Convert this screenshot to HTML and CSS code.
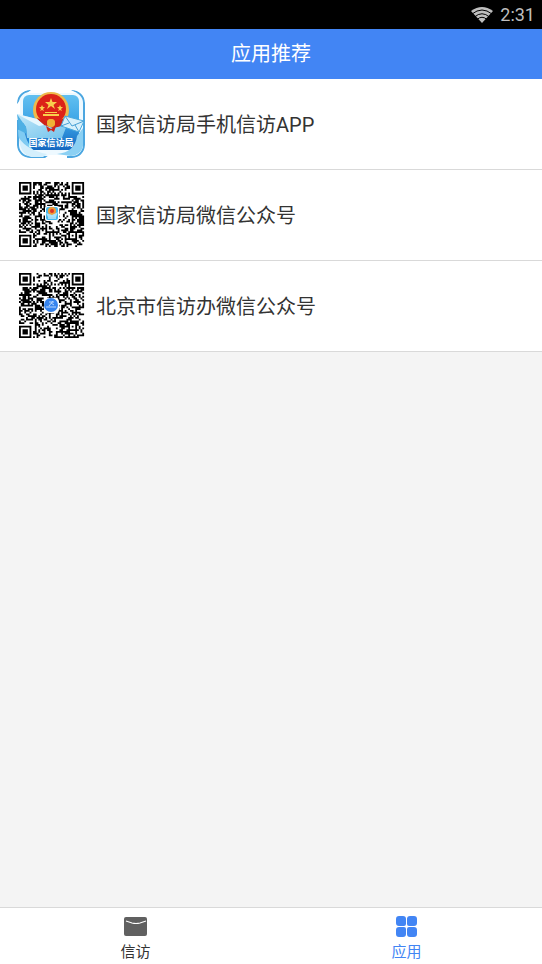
FILE: index.html
```html
<!DOCTYPE html>
<html lang="zh">
<head>
    <meta charset="UTF-8">
    <meta name="viewport" content="width=device-width, initial-scale=1.0">
    <title>应用推荐</title>
    <link rel="stylesheet" href="styles.css">
</head>
<body>
    <div class="status-bar">
        <svg class="wifi" viewBox="0 0 22 16" aria-hidden="true">
            <path fill="#bebebe" d="M0 4Q11-4 22 4L11 16Z"/>
            <path fill="none" stroke="#000" stroke-width="1" d="M1 7Q11-1 21 7M3.500 10Q11 3.500 18.500 10M6 12.500Q11 8 16 12.500"/>
        </svg>
        <span class="time">2:31</span>
    </div>

    <header class="header">
        <h1 class="title">应用推荐</h1>
    </header>

    <main class="content">
        <ul class="app-list">
            <li>
                <a href="#" class="app-item">
                    <svg class="app-icon" viewBox="0 0 68 68" aria-hidden="true">
                        <defs>
                            <linearGradient id="sky" x1="0" y1="0" x2="0" y2="1">
                                <stop offset="0" stop-color="#62c0f0"/>
                                <stop offset="0.500" stop-color="#3aa3e6"/>
                                <stop offset="1" stop-color="#1467c0"/>
                            </linearGradient>
                            <linearGradient id="ribbon" x1="0" y1="0" x2="1" y2="1">
                                <stop offset="0" stop-color="#bfe7f9"/>
                                <stop offset="1" stop-color="#74c3ec"/>
                            </linearGradient>
                            <clipPath id="round"><rect width="68" height="68" rx="13"/></clipPath>
                        </defs>
                        <g clip-path="url(#round)">
                            <rect width="68" height="68" fill="#eef9ff"/>
                            <rect x="1" y="1" width="66" height="66" rx="12" fill="none" stroke="#4ba6e0" stroke-width="2"/>
                            <path fill="#fff" d="M14 0H54L60 3H10ZM0 14L3 10V30H0ZM32 65H50V68H28Z"/>
                            <rect x="6" y="5" width="56" height="55" rx="6" fill="url(#sky)"/>
                            <path fill="#7fcbf2" d="M1 40L7 38Q8 50 16 60L8 61Q1 52 1 40Z"/>
                            <path fill="#d4effc" d="M2 48Q10 60 30 64L26 67H14Q3 64 2 48Z"/>
                            <path fill="#8bd0f3" d="M60 46L66 38V56Q64 65 54 66L40 64Q58 62 60 46Z"/>
                            <circle cx="34" cy="20" r="18" fill="#efb94a"/>
                            <circle cx="34" cy="19" r="15" fill="#dc2318"/>
                            <path fill="#f9cf4d" d="M34 8L35.500 12H40L36.500 15 38 19 34 16 30 19 31.500 15 28 12H32.500ZM25 15L26 17H28L26 19 27 21 25 20 23 21 24 19 22 17H24ZM43 15L44 17H46L44 19 45 21 43 20 41 21 42 19 40 17H42ZM26 24H42V26H26ZM28 22H40V23H28Z"/>
                            <path fill="#cf2318" d="M20 28Q34 35 48 28L46 34Q42 38 38 38L36 42H32L30 38Q26 38 22 34Z"/>
                            <circle cx="34" cy="33" r="4" fill="#efb337"/>
                            <path fill="url(#ribbon)" d="M0 24L20 29 27 35 36 38 50 35 45 48H10L9 37Z"/>
                            <path fill="#4fb0e4" d="M0 24L9 37 10 44 2 40Z"/>
                            <path fill="#e7f7fe" d="M0 24L20 29 27 35 22 36Z"/>
                            <circle cx="34" cy="33" r="4" fill="#efb337"/>
                            <path fill="#cf2318" d="M29 36L34 39 39 36 37 42 34 40 31 42Z"/>
                            <path fill="#d7f0fb" stroke="#4aaade" stroke-width="1" d="M48 26L67 31 62 42 44 36Z"/>
                            <path fill="none" stroke="#469fd5" stroke-width="1" d="M48 26L55 36 67 31M44 36L52 33M58 35L62 42"/>
                            <text class="app-icon-label" x="34" y="56" text-anchor="middle">国家信访局</text>
                        </g>
                    </svg>
                    <span class="app-name">国家信访局手机信访APP</span>
                </a>
            </li>
            <li>
                <a href="#" class="app-item">
                    <svg class="app-icon" viewBox="0 0 68 68" aria-hidden="true">
                        <g id="qrNational" transform="translate(2 1) scale(1.757)"></g>
                        <rect x="28" y="25" width="14" height="15" rx="2" fill="#fff"/>
                        <rect x="29" y="26" width="12" height="13" rx="2" fill="#45b8ed"/>
                        <circle cx="35" cy="30" r="4" fill="#f29b35"/>
                        <circle cx="35" cy="30" r="2" fill="#dc3326"/>
                        <path fill="#a9e1f8" d="M29 32L35 34 41 31 39 36H31Z"/>
                        <path stroke="#fff" stroke-width="1" d="M31 37H39"/>
                    </svg>
                    <span class="app-name">国家信访局微信公众号</span>
                </a>
            </li>
            <li>
                <a href="#" class="app-item">
                    <svg class="app-icon" viewBox="0 0 68 68" aria-hidden="true">
                        <g id="qrBeijing" transform="translate(2 1) scale(1.757)"></g>
                        <rect x="27" y="26" width="15" height="15" rx="4" fill="#fff"/>
                        <circle cx="34" cy="33" r="7" fill="#3684ee"/>
                        <path fill="none" stroke="#b8d7ff" stroke-width="1" d="M32 30H37M36 29L32 34M34 31L37 33M29 35H39"/>
                    </svg>
                    <span class="app-name">北京市信访办微信公众号</span>
                </a>
            </li>
        </ul>
    </main>

    <nav class="tab-bar">
        <a href="#" class="tab">
            <svg class="tab-icon" viewBox="0 0 24 22" aria-hidden="true">
                <rect x="0" y="1" width="23" height="19" rx="2" fill="#606060"/>
                <path fill="none" stroke="#fff" stroke-width="1.200" d="M2 5L8 7Q12 8 16 7L22 5"/>
            </svg>
            <span>信访</span>
        </a>
        <a href="#" class="tab active">
            <svg class="tab-icon" viewBox="0 0 24 22" aria-hidden="true">
                <path fill="#4285f4" d="M4 0H8Q11 0 11 3V8Q11 10 9 10H4Q1 10 1 7V3Q1 0 4 0ZM15 0H19Q22 0 22 3V7Q22 10 19 10H14Q12 10 12 8V3Q12 0 15 0ZM4 11H9Q11 11 11 13V18Q11 21 8 21H4Q1 21 1 18V14Q1 11 4 11ZM14 11H19Q22 11 22 14V18Q22 21 19 21H15Q12 21 12 18V13Q12 11 14 11Z"/>
            </svg>
            <span>应用</span>
        </a>
    </nav>

    <script src="qr.js"></script>
</body>
</html>
```
FILE: styles.css
```css
* {
    box-sizing: border-box;
}

body {
    margin: 0;
    min-height: 100vh;
    display: flex;
    flex-direction: column;
    background: #f4f4f4;
    color: #333;
    font-family: Roboto, "Noto Sans CJK SC", sans-serif;
}

a {
    color: inherit;
    text-decoration: none;
}

.status-bar {
    display: flex;
    align-items: center;
    justify-content: flex-end;
    gap: 7px;
    padding: 1px 7px 0 0;
    background: #000;
    color: #bebebe;
}

.wifi {
    width: 22px;
    height: 16px;
}

.time {
    font-size: 18px;
    line-height: 28px;
}

.header {
    background: #4285f4;
    color: #fff;
    text-align: center;
}

.title {
    margin: 0;
    font-size: 20px;
    font-weight: normal;
    line-height: 50px;
}

.content {
    flex: 1;
}

.app-list {
    margin: 0;
    padding: 0;
    list-style: none;
    background: #fff;
}

.app-item {
    display: flex;
    align-items: center;
    gap: 11px;
    padding: 11px 17px;
    border-bottom: 1px solid #d9d9d9;
}

.app-icon {
    flex: none;
    width: 68px;
    height: 68px;
}

.app-icon-label {
    font-size: 9px;
    font-weight: bold;
    fill: #fff;
}

.app-name {
    padding-top: 2px;
    font-size: 20px;
    line-height: 28px;
}

.tab-bar {
    position: sticky;
    bottom: 0;
    display: flex;
    background: #fff;
    border-top: 1px solid #d9d9d9;
}

.tab {
    flex: 1;
    display: flex;
    flex-direction: column;
    align-items: center;
    gap: 4px;
    padding: 8px 0 2px;
    font-size: 15px;
    line-height: 20px;
}

.tab.active {
    color: #4285f4;
}

.tab-icon {
    width: 24px;
    height: 22px;
}
```
FILE: qr.js
```js
const SIZE = 37;

// 固定种子，保证每次生成的图案一致
function createRandom(seed) {
    return function () {
        seed = (seed + 0x6d2b79f5) | 0;
        let t = Math.imul(seed ^ (seed >>> 15), seed | 1);
        t ^= t + Math.imul(t ^ (t >>> 7), t | 61);
        return ((t ^ (t >>> 14)) >>> 0) / 4294967296;
    };
}

// 定位图案和校正图案
function drawSquare(cells, left, top, size) {
    for (let y = 0; y < size; y++) {
        for (let x = 0; x < size; x++) {
            const edge = Math.min(x, y, size - 1 - x, size - 1 - y);
            cells[top + y][left + x] = edge !== 1;
        }
    }
}

function clearArea(cells, left, top, size) {
    for (let y = top; y < top + size; y++) {
        for (let x = left; x < left + size; x++) {
            cells[y][x] = false;
        }
    }
}

function drawQr(id, seed) {
    const random = createRandom(seed);
    const cells = [];
    for (let y = 0; y < SIZE; y++) {
        cells.push([]);
        for (let x = 0; x < SIZE; x++) {
            cells[y].push(random() < 0.5);
        }
    }

    for (let i = 0; i < SIZE; i++) {
        cells[6][i] = i % 2 === 0;
        cells[i][6] = i % 2 === 0;
    }

    clearArea(cells, 0, 0, 8);
    clearArea(cells, SIZE - 8, 0, 8);
    clearArea(cells, 0, SIZE - 8, 8);
    drawSquare(cells, 0, 0, 7);
    drawSquare(cells, SIZE - 7, 0, 7);
    drawSquare(cells, 0, SIZE - 7, 7);
    drawSquare(cells, SIZE - 9, SIZE - 9, 5);

    let path = '';
    cells.forEach((row, y) => {
        row.forEach((filled, x) => {
            if (filled) {
                path += `M${x} ${y}h1.05v1.05h-1.05z`;
            }
        });
    });
    document.getElementById(id).innerHTML = `<path d="${path}"/>`;
}

drawQr('qrNational', 2019);
drawQr('qrBeijing', 731);
```
